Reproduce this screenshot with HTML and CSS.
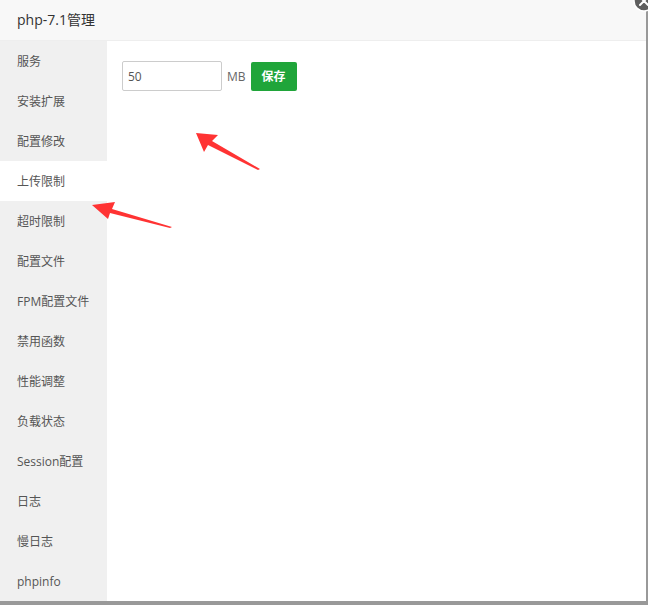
FILE: index.html
```html
<!DOCTYPE html>
<html lang="zh-CN">
<head>
<meta charset="utf-8">
<title>php-7.1管理</title>
<link rel="stylesheet" href="styles.css">
</head>
<body>
<div class="screen">
  <div class="layer">
    <div class="layer-title">php-7.1管理</div>
    <div class="layer-body">
      <ul class="side-menu">
        <li>服务</li>
        <li>安装扩展</li>
        <li>配置修改</li>
        <li class="active">上传限制</li>
        <li>超时限制</li>
        <li>配置文件</li>
        <li>FPM配置文件</li>
        <li>禁用函数</li>
        <li>性能调整</li>
        <li>负载状态</li>
        <li>Session配置</li>
        <li>日志</li>
        <li>慢日志</li>
        <li>phpinfo</li>
      </ul>
      <div class="content">
        <div class="form-row">
          <input class="num-input" type="text" value="50">
          <span class="unit">MB</span>
          <button class="btn-save">保存</button>
        </div>
      </div>
    </div>
    <span class="close-btn"><svg width="22" height="22" viewBox="0 0 22 22"><circle cx="11" cy="11" r="10" fill="#5f5f5f" stroke="#fff" stroke-width="1.5"/><path d="M7 7 L15 15 M15 7 L7 15" stroke="#fff" stroke-width="2" stroke-linecap="round"/></svg></span>
  </div>
  <svg class="arrows" width="648" height="605" viewBox="0 0 648 605">
    <polygon points="196,133 218,135 212,141 260,169 258,170 208,145 204,152" fill="#f33"/>
    <polygon points="92,205 115,202 112,209 172,227 170,228 110,213 108,219" fill="#f33"/>
  </svg>
</div>
</body>
</html>
```
FILE: styles.css
```css
* { box-sizing: border-box; }
html, body { margin: 0; padding: 0; }
body {
  width: 648px;
  height: 605px;
  background: #999;
  font-family: "Open Sans", "Noto Sans CJK SC", sans-serif;
  overflow: hidden;
}
.screen { position: relative; width: 648px; height: 605px; }
.layer {
  position: relative;
  width: 646px;
  height: 601px;
  background: #fff;
  display: flex;
  flex-direction: column;
}
.layer-title {
  height: 41px;
  line-height: 40px;
  padding-left: 17px;
  font-size: 14px;
  color: #333;
  background: #f8f8f8;
  border-bottom: 1px solid #eee;
}
.layer-body { flex: 1; display: flex; min-height: 0; }
.side-menu {
  list-style: none;
  margin: 0;
  padding: 0;
  width: 107px;
  background: #f0f0f0;
}
.side-menu li {
  height: 40px;
  line-height: 38px;
  padding-top: 2px;
  padding-left: 17px;
  font-size: 12px;
  color: #555;
  white-space: nowrap;
}
.side-menu li.active { background: #fff; }
.content { flex: 1; padding: 20px 15px; }
.form-row { display: flex; align-items: center; }
.num-input {
  width: 100px;
  height: 30px;
  border: 1px solid #ccc;
  border-radius: 2px;
  padding: 0 5px;
  font-family: inherit;
  font-size: 12px;
  color: #555;
  outline: none;
}
.unit { margin-left: 5px; font-size: 12px; color: #666; }
.btn-save {
  margin-left: 5px;
  height: 29px;
  width: 46px;
  border: 0;
  border-radius: 2px;
  background: #20a53a;
  color: #fff;
  font-family: inherit;
  font-size: 12px;
  font-weight: bold;
  padding: 0;
}
.close-btn { position: absolute; right: -9px; top: -10px; line-height: 0; }
.arrows { position: absolute; left: 0; top: 0; pointer-events: none; }
```
